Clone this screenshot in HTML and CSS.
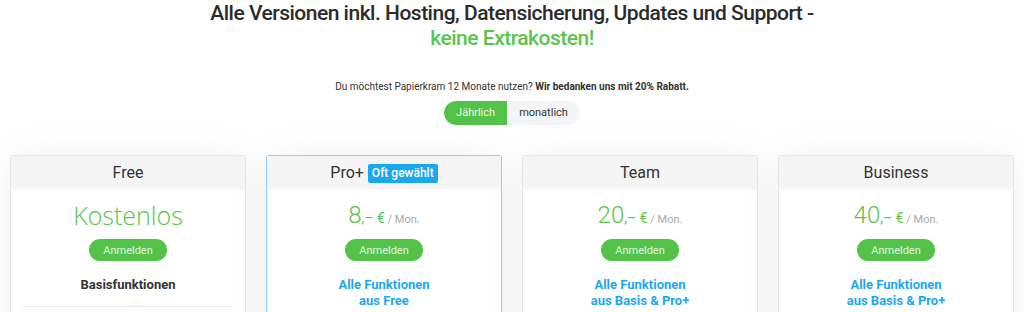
FILE: index.html
```html
<!DOCTYPE html>
<html lang="de">
<head>
    <meta charset="UTF-8">
    <meta name="viewport" content="width=device-width, initial-scale=1.0">
    <title>Preise</title>
    <link rel="stylesheet" href="styles.css">
</head>
<body>
    <div class="intro">
        <h1>Alle Versionen inkl. Hosting, Datensicherung, Updates und Support -<br><span class="green">keine Extrakosten!</span></h1>
        <p class="hint">Du möchtest Papierkram 12 Monate nutzen? <b>Wir bedanken uns mit 20% Rabatt.</b></p>
        <div class="toggle">
            <span class="toggle-item active">Jährlich</span>
            <span class="toggle-item">monatlich</span>
        </div>
    </div>

    <div class="plans">
        <div class="plan">
            <div class="plan-head">Free</div>
            <div class="plan-body">
                <div class="price free">Kostenlos</div>
                <button class="signup">Anmelden</button>
                <div class="features dark">Basisfunktionen</div>
                <div class="divider"></div>
            </div>
        </div>
        <div class="plan featured">
            <div class="plan-head">Pro+ <span class="badge">Oft gewählt</span></div>
            <div class="plan-body">
                <div class="price"><span class="amount">8</span><span class="cents">,– €</span><span class="per"> / Mon.</span></div>
                <button class="signup">Anmelden</button>
                <div class="features">Alle Funktionen<br>aus Free</div>
            </div>
        </div>
        <div class="plan">
            <div class="plan-head">Team</div>
            <div class="plan-body">
                <div class="price"><span class="amount">20</span><span class="cents">,– €</span><span class="per"> / Mon.</span></div>
                <button class="signup">Anmelden</button>
                <div class="features">Alle Funktionen<br>aus Basis &amp; Pro+</div>
            </div>
        </div>
        <div class="plan">
            <div class="plan-head">Business</div>
            <div class="plan-body">
                <div class="price"><span class="amount">40</span><span class="cents">,– €</span><span class="per"> / Mon.</span></div>
                <button class="signup">Anmelden</button>
                <div class="features">Alle Funktionen<br>aus Basis &amp; Pro+</div>
            </div>
        </div>
    </div>
</body>
</html>
```

FILE: styles.css
```css
body {
    font-family: Roboto, Arial, sans-serif;
    background-color: #fff;
    color: #333;
    margin: 0;
    overflow: hidden;
}

.intro {
    text-align: center;
}

h1 {
    font-size: 21px;
    font-weight: 500;
    line-height: 25px;
    letter-spacing: -0.5px;
    margin: 0;
    padding-top: 1px;
    color: #2b2b2b;
}

.green {
    color: #5bc44e;
}

.hint {
    font-size: 10px;
    margin: 30px 0 9px;
    color: #333;
}

.toggle {
    display: inline-flex;
    background-color: #f3f5f7;
    border-radius: 12px;
    overflow: hidden;
}

.toggle-item {
    font-size: 11px;
    padding: 0 12px;
    line-height: 24px;
    color: #333;
}

.toggle-item.active {
    background-color: #52c348;
    color: #e9f7e6;
    border-radius: 12px 0 0 12px;
}

/* Karten */
.plans {
    display: flex;
    gap: 20px;
    padding: 0 10px;
    margin-top: 30px;
}

.plan {
    flex: 1;
    border: 1px solid #e6e6e6;
    border-radius: 3px;
    background-color: #fff;
    box-shadow: 0 0 40px rgba(0, 0, 0, 0.06);
}

.plan.featured {
    border-color: #8ad2f6;
}

.plan-head {
    background-color: #f5f5f5;
    text-align: center;
    font-size: 16px;
    line-height: 33px;
    height: 33px;
    color: #333;
}

.badge {
    display: inline-block;
    background-color: #1aa8ec;
    color: #fff;
    font-size: 12px;
    font-weight: 500;
    line-height: 19px;
    padding: 0 4px;
    border-radius: 2px;
    vertical-align: 1px;
}

.plan-body {
    text-align: center;
    padding: 8px 12px 60px;
}

.price {
    color: #5bc44e;
    height: 36px;
    line-height: 36px;
}

.price.free {
    font-family: "Open Sans", Arial, sans-serif;
    font-size: 25px;
    font-weight: 300;
}

.amount {
    font-size: 24px;
    font-weight: 300;
}

.cents {
    font-size: 14px;
}

.per {
    font-size: 11px;
    color: #aaa;
}

.signup {
    margin-top: 6px;
    background-color: #52c348;
    color: #e6f5e3;
    border: none;
    border-radius: 11px;
    font-family: inherit;
    font-size: 11px;
    height: 22px;
    padding: 0 14px;
}

.features {
    margin-top: 16px;
    font-size: 13px;
    font-weight: 700;
    line-height: 16px;
    color: #1ea8ea;
}

.features.dark {
    color: #333;
}

.divider {
    border-top: 1px solid #e8e8e8;
    margin-top: 13px;
}
```
